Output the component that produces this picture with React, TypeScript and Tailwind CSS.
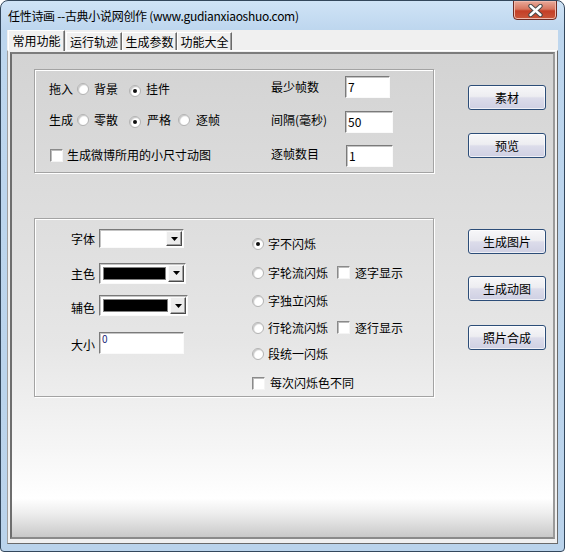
import React from "react";

const FONT = "font-['Noto_Sans_CJK_SC','Noto_Sans',sans-serif]";

function Radio({ checked = false }: { checked?: boolean }) {
  return (
    <span className="inline-flex h-[12px] w-[12px] shrink-0 items-center justify-center rounded-full border border-[#b4b4b4] bg-[radial-gradient(circle_at_60%_60%,#ffffff_45%,#dcdcdc_100%)] shadow-[inset_1px_1px_1px_#c8c8c8]">
      {checked && <span className="h-[4px] w-[4px] rounded-full bg-[#101010]" />}
    </span>
  );
}

function Check() {
  return (
    <span className="inline-block h-[13px] w-[13px] shrink-0 border border-t-[#8a8a8a] border-l-[#8a8a8a] border-r-[#f4f4f4] border-b-[#f4f4f4] bg-white shadow-[inset_1px_1px_0_#bcbcbc]" />
  );
}

function Field({ value, w, h = 22, small = false }: { value: string; w: number; h?: number; small?: boolean }) {
  return (
    <div
      style={{ width: w, height: h }}
      className={`shrink-0 border border-t-[#7a7a7a] border-l-[#7a7a7a] border-r-[#fafafa] border-b-[#fafafa] bg-white pl-[2px] shadow-[inset_1px_1px_0_#c4c4c4] ${
        small ? "pt-0 text-[10px] leading-[12px] text-[#1a2a7a]" : "pt-[3px] text-[12px] leading-[13px] text-black"
      }`}
    >
      {value}
    </div>
  );
}

function DropBtn() {
  return (
    <div className="flex h-full w-[16px] shrink-0 items-center justify-center border border-t-[#fafafa] border-l-[#fafafa] border-r-[#4a4a4a] border-b-[#4a4a4a] bg-[#ececec] shadow-[inset_-1px_-1px_0_#a0a0a0]">
      <svg width="7" height="4" viewBox="0 0 7 4">
        <path d="M0 0h7L3.5 4z" fill="#000" />
      </svg>
    </div>
  );
}

function Combo({ w, h, color }: { w: number; h: number; color?: boolean }) {
  return (
    <div
      style={{ width: w, height: h }}
      className="flex shrink-0 border border-t-[#7a7a7a] border-l-[#7a7a7a] border-r-[#fafafa] border-b-[#fafafa] bg-white p-[1px] shadow-[inset_1px_1px_0_#c4c4c4]"
    >
      <div className="flex-1 p-[2px]">
        {color && <div className="h-full w-full border border-[#808080] bg-black" />}
      </div>
      <DropBtn />
    </div>
  );
}

function Btn({ label }: { label: string }) {
  return (
    <div className="flex h-[25px] w-[78px] items-center justify-center rounded-[3px] border border-[#2c4d78] bg-[linear-gradient(to_bottom,#f7f7f9_0%,#ededf1_45%,#dcdcea_52%,#cfd0e3_100%)] text-[12px] leading-none text-black shadow-[inset_0_0_0_1px_#ffffffaa]">
      {label}
    </div>
  );
}

function Tab({ label, active, w }: { label: string; active?: boolean; w: number }) {
  return active ? (
    <div
      style={{ width: w }}
      className="relative z-10 -mb-px flex h-[21px] items-center justify-center border border-b-0 border-t-[#ffffff] border-l-[#ffffff] border-r-[#6a6a6a] bg-[#f0f0f0] text-[12px] leading-none text-black shadow-[inset_-1px_0_0_#a0a0a0]"
    >
      {label}
    </div>
  ) : (
    <div
      style={{ width: w }}
      className="flex h-[18px] items-center justify-center border border-b-0 border-t-[#ffffff] border-l-[#ffffff] border-r-[#6a6a6a] bg-[#f0f0f0] pt-[1px] text-[12px] leading-none text-black shadow-[inset_-1px_0_0_#a0a0a0]"
    >
      {label}
    </div>
  );
}

export default function App() {
  return (
    <div
      className={`${FONT} relative flex h-[552px] w-[565px] flex-col overflow-hidden rounded-t-[8px] rounded-b-[4px] border border-[#33475c] bg-[linear-gradient(to_bottom,#cfe3f6_0%,#bdd6ee_30px,#bad3eb_100%)] text-black`}
    >
      {/* title bar */}
      <div className="relative flex h-[29px] shrink-0 items-center pl-[7px] pt-[1px] text-[12px] leading-none tracking-[-0.3px] text-black">
        任性诗画 --古典小说网创作 (www.gudianxiaoshuo.com)
        <div className="absolute right-[7px] top-[-1px] flex h-[20px] w-[44px] items-center justify-center rounded-b-[4px] border border-[#6e2a22] bg-[linear-gradient(to_bottom,#e9aa9a_0%,#d7765f_45%,#c43e26_55%,#c9563a_100%)] shadow-[inset_0_0_0_1px_#f0b9ac]">
          <svg width="15" height="13" viewBox="0 0 15 13">
            <path d="M2.5 2L12.5 11M12.5 2L2.5 11" stroke="#4a4a4a" strokeWidth="4.4" strokeLinecap="round" />
            <path d="M2.5 2L12.5 11M12.5 2L2.5 11" stroke="#ffffff" strokeWidth="2.4" strokeLinecap="round" />
          </svg>
        </div>
      </div>

      {/* client area */}
      <div className="mx-[6px] flex h-[514px] flex-col bg-[#f0f0f0]">
        {/* tab strip */}
        <div className="flex h-[20px] shrink-0 items-end pl-[1px]">
          <Tab label="常用功能" active w={57} />
          <div className="w-[1px]" />
          <Tab label="运行轨迹" w={56} />
          <Tab label="生成参数" w={55} />
          <Tab label="功能大全" w={55} />
        </div>

        {/* pane */}
        <div className="flex flex-1 flex-col border border-t-[#ffffff] border-l-[#a0a0a0] border-r-[#6a6a6a] border-b-[#6a6a6a] pb-[4px] pl-[2px] pr-[2px] pt-[1px]">
          <div className="flex flex-1 border-2 border-t-[#7c7c7c] border-l-[#6e6e6e] border-r-[#9a9a9a] border-b-[#8a8a8a] bg-[linear-gradient(to_bottom,#d3d3d3_0%,#dedede_35%,#e6e6e6_60%,#f6f6f6_82%,#ffffff_92%,#eeeeee_95%,#c9c9c9_100%)] pl-[22px] pt-[15px]">
            {/* left: group boxes */}
            <div className="flex w-[400px] flex-col">
              {/* group 1 */}
              <div className="flex h-[104px] border border-[#a3a3a3] shadow-[inset_1px_1px_0_#ffffff,1px_1px_0_#ffffff] text-[12px] leading-none">
                <div className="flex w-[236px] flex-col pl-[14px] pt-[12px]">
                  <div className="flex h-[14px] items-center">
                    <span>拖入</span>
                    <span className="ml-[4px]"><Radio /></span>
                    <span className="ml-[5px]">背景</span>
                    <span className="ml-[11px]"><Radio checked /></span>
                    <span className="ml-[5px]">挂件</span>
                  </div>
                  <div className="mt-[17px] flex h-[14px] items-center">
                    <span>生成</span>
                    <span className="ml-[4px]"><Radio /></span>
                    <span className="ml-[5px]">零散</span>
                    <span className="ml-[11px]"><Radio checked /></span>
                    <span className="ml-[6px]">严格</span>
                    <span className="ml-[7px]"><Radio /></span>
                    <span className="ml-[6px]">逐帧</span>
                  </div>
                  <div className="mt-[21px] flex h-[14px] items-center pl-[1px]">
                    <Check />
                    <span className="ml-[4px]">生成微博所用的小尺寸动图</span>
                  </div>
                </div>
                <div className="flex flex-col pt-[6px]">
                  <div className="flex h-[22px] items-center">
                    <span className="w-[74px] pb-[1px]">最少帧数</span>
                    <Field value="7" w={45} />
                  </div>
                  <div className="mt-[13px] flex h-[22px] items-center">
                    <span className="w-[74px] pb-[5px]">间隔(毫秒)</span>
                    <Field value="50" w={48} />
                  </div>
                  <div className="mt-[12px] flex h-[22px] items-center">
                    <span className="w-[75px] pb-[5px]">逐帧数目</span>
                    <Field value="1" w={47} />
                  </div>
                </div>
              </div>

              {/* group 2 */}
              <div className="mt-[45px] flex h-[179px] border border-[#a3a3a3] shadow-[inset_1px_1px_0_#ffffff,1px_1px_0_#ffffff] text-[12px] leading-none">
                <div className="flex w-[217px] flex-col pl-[36px] pt-[10px]">
                  <div className="flex h-[19px] items-center">
                    <span className="w-[28px]">字体</span>
                    <Combo w={85} h={19} />
                  </div>
                  <div className="mt-[15px] flex h-[20px] items-center">
                    <span className="w-[28px] pt-[2px]">主色</span>
                    <Combo w={87} h={21} color />
                  </div>
                  <div className="mt-[12px] flex h-[21px] items-center">
                    <span className="w-[28px] pt-[4px]">辅色</span>
                    <Combo w={89} h={21} color />
                  </div>
                  <div className="mt-[16px] flex h-[22px] items-center">
                    <span className="w-[28px] pt-[3px]">大小</span>
                    <Field value="0" w={85} small />
                  </div>
                </div>
                <div className="flex flex-col pt-[18px]">
                  <div className="flex h-[14px] items-center">
                    <Radio checked />
                    <span className="ml-[4px]">字不闪烁</span>
                  </div>
                  <div className="mt-[15px] flex h-[14px] items-center">
                    <Radio />
                    <span className="ml-[4px]">字轮流闪烁</span>
                    <span className="ml-[9px]"><Check /></span>
                    <span className="ml-[5px]">逐字显示</span>
                  </div>
                  <div className="mt-[14px] flex h-[14px] items-center">
                    <Radio />
                    <span className="ml-[4px]">字独立闪烁</span>
                  </div>
                  <div className="mt-[13px] flex h-[14px] items-center">
                    <Radio />
                    <span className="ml-[4px]">行轮流闪烁</span>
                    <span className="ml-[9px]"><Check /></span>
                    <span className="ml-[5px]">逐行显示</span>
                  </div>
                  <div className="mt-[12px] flex h-[14px] items-center">
                    <Radio />
                    <span className="ml-[4px]">段统一闪烁</span>
                  </div>
                  <div className="mt-[15px] flex h-[14px] items-center">
                    <Check />
                    <span className="ml-[5px]">每次闪烁色不同</span>
                  </div>
                </div>
              </div>
            </div>

            {/* right: buttons */}
            <div className="ml-[34px] flex flex-col pt-[16px]">
              <Btn label="素材" />
              <div className="mt-[23px]"><Btn label="预览" /></div>
              <div className="mt-[71px]"><Btn label="生成图片" /></div>
              <div className="mt-[22px]"><Btn label="生成动图" /></div>
              <div className="mt-[24px]"><Btn label="照片合成" /></div>
            </div>
          </div>
        </div>
      </div>
    </div>
  );
}
